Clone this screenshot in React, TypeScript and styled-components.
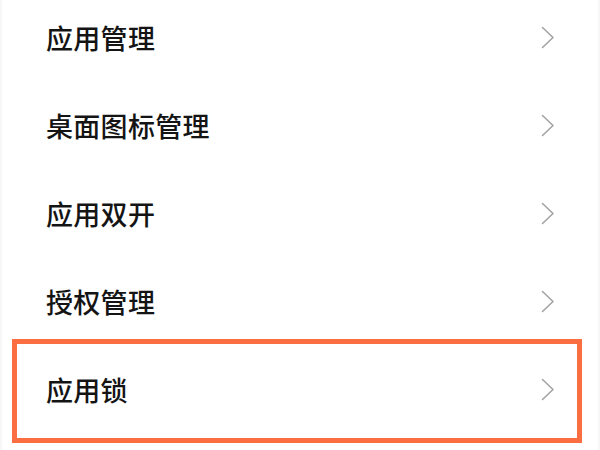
import React from "react";
import styled, { createGlobalStyle } from "styled-components";

const Global = createGlobalStyle`
  html, body {
    margin: 0;
    padding: 0;
    background: #ffffff;
    overflow: hidden;
  }
  body {
    font-family: "Noto Sans CJK SC", "Noto Sans", sans-serif;
  }
`;

const Screen = styled.div`
  width: 600px;
  height: 450px;
  background: #ffffff;
  overflow: hidden;
  box-sizing: border-box;
  border-left: 2px solid #f7f7f7;
  border-right: 2px solid #f7f7f7;
`;

const List = styled.ul`
  list-style: none;
  margin: -7px 0 0 0;
  padding: 0;
  display: flex;
  flex-direction: column;
`;

const Row = styled.li<{ $highlight?: boolean }>`
  position: relative;
  height: 88px;
  display: flex;
  align-items: center;
  justify-content: space-between;
  padding: 0 43px 0 44px;
  box-sizing: border-box;

  ${(p) =>
    p.$highlight &&
    `
    &::after {
      content: "";
      position: absolute;
      left: 10px;
      right: 16px;
      top: -6px;
      bottom: -10px;
      border: 5px solid #fa6e42;
      pointer-events: none;
    }
  `}
`;

const Label = styled.span`
  font-family: "Noto Sans CJK SC", "Noto Sans", sans-serif;
  font-size: 27px;
  font-weight: 500;
  color: #141414;
  letter-spacing: 0.3px;
  line-height: 1;
`;

const Chevron = styled.svg`
  width: 14px;
  height: 23px;
  flex: none;
`;

const Arrow = () => (
  <Chevron viewBox="0 0 14 23">
    <polyline
      points="1.5,1.5 12,11.5 1.5,21.5"
      fill="none"
      stroke="#a3a3a3"
      strokeWidth="1.6"
      strokeLinecap="round"
      strokeLinejoin="round"
    />
  </Chevron>
);

const items = ["应用管理", "桌面图标管理", "应用双开", "授权管理", "应用锁"];

export default function App() {
  return (
    <>
      <Global />
      <Screen>
        <List>
          {items.map((t, i) => (
            <Row key={t} $highlight={i === items.length - 1}>
              <Label>{t}</Label>
              <Arrow />
            </Row>
          ))}
        </List>
      </Screen>
    </>
  );
}
